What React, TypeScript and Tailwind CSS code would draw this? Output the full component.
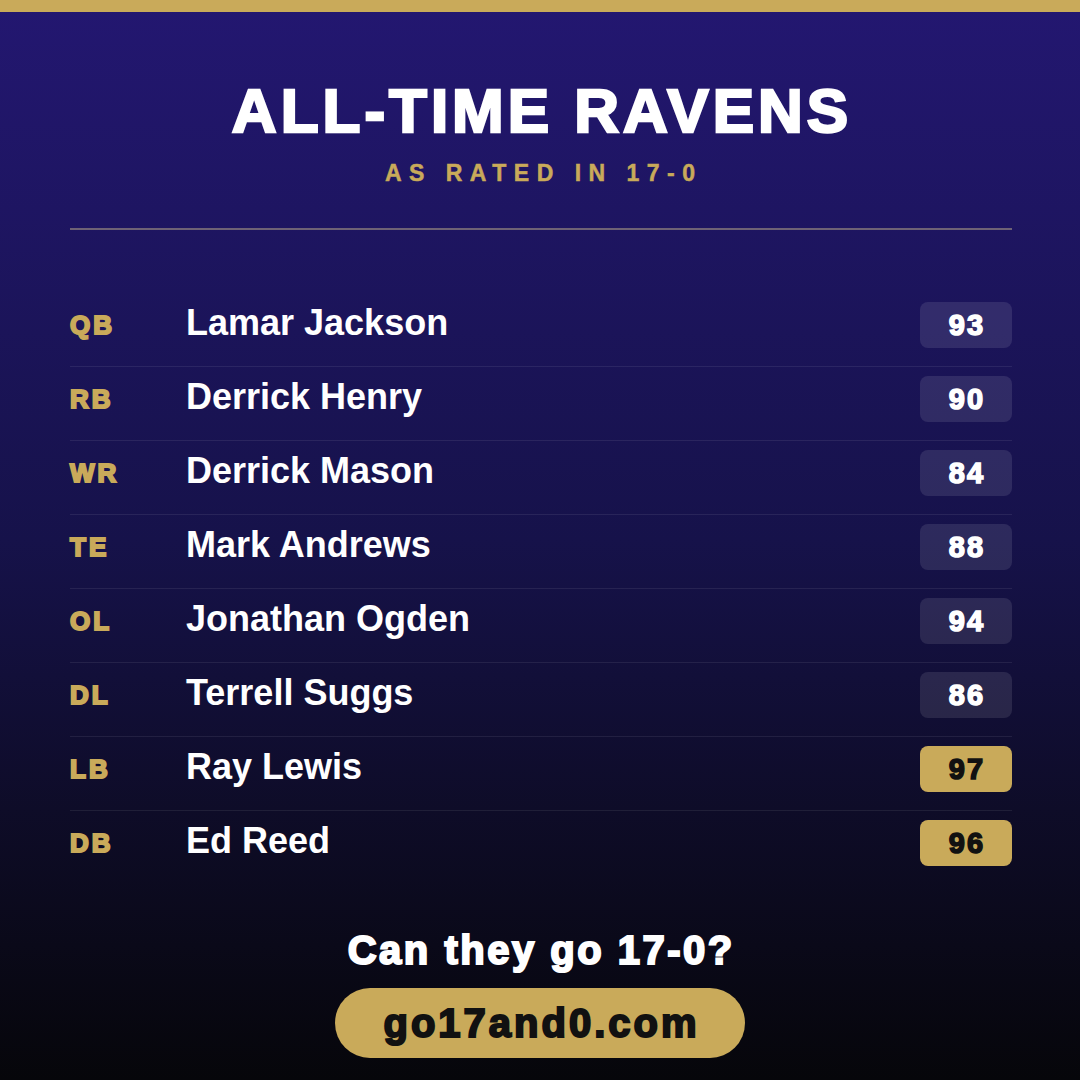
const players = [
  { pos: "QB", name: "Lamar Jackson", rating: 93 },
  { pos: "RB", name: "Derrick Henry", rating: 90 },
  { pos: "WR", name: "Derrick Mason", rating: 84 },
  { pos: "TE", name: "Mark Andrews", rating: 88 },
  { pos: "OL", name: "Jonathan Ogden", rating: 94 },
  { pos: "DL", name: "Terrell Suggs", rating: 86 },
  { pos: "LB", name: "Ray Lewis", rating: 97 },
  { pos: "DB", name: "Ed Reed", rating: 96 },
];

const App = () => {
  return (
    <div className="w-[1080px] h-[1080px] flex flex-col overflow-hidden font-['Liberation_Sans',Arial,sans-serif] bg-[linear-gradient(180deg,#231771_0%,#16124a_50%,#0e0c28_75%,#06060a_100%)]">
      {/* Top accent bar */}
      <div className="h-[12px] bg-[#c9aa5a] shrink-0" />

      {/* Header */}
      <div className="flex flex-col items-center pt-[68px]">
        <h1 className="text-[62px] leading-none font-bold text-white tracking-[4px] pl-[4px] [-webkit-text-stroke:2.5px_currentColor]">
          ALL-TIME RAVENS
        </h1>
        <p className="mt-[20px] text-[23px] leading-none font-bold text-[#c9aa5a] tracking-[7.5px] pl-[7.5px] [-webkit-text-stroke:0.5px_currentColor]">
          AS RATED IN 17-0
        </p>
      </div>

      <div className="mt-[43px] ml-[70px] mr-[68px] h-[2px] bg-[#6e6275]" />

      {/* Roster */}
      <div className="mt-[63px] pl-[70px] pr-[68px] flex flex-col">
        {players.map((p, i) => {
          const top = p.rating >= 95;
          return (
            <div
              key={p.pos}
              className={`flex items-center pt-[9px] pb-[18px] ${i < players.length - 1 ? "border-b border-white/[0.08]" : ""}`}
            >
              <div className="w-[116px] text-[26px] leading-none font-bold text-[#c9aa5a] tracking-[3px] [-webkit-text-stroke:2px_currentColor]">
                {p.pos}
              </div>
              <div className="flex-1 text-[36px] leading-none font-bold text-white mb-[5px]">
                {p.name}
              </div>
              <div
                className={`w-[92px] h-[46px] rounded-[8px] flex items-center justify-center text-[29px] leading-none font-bold tracking-[2px] pl-[2px] [-webkit-text-stroke:1.5px_currentColor] ${
                  top ? "bg-[#c9aa5a] text-[#111111]" : "bg-white/10 text-white"
                }`}
              >
                {p.rating}
              </div>
            </div>
          );
        })}
      </div>

      {/* Footer call to action */}
      <div className="mt-[46px] flex flex-col items-center">
        <p className="text-[40px] leading-none font-bold text-white tracking-[2.5px] pl-[2.5px] [-webkit-text-stroke:2px_currentColor]">
          Can they go 17-0?
        </p>
        <div className="mt-[18px] w-[410px] h-[70px] rounded-full bg-[#c9aa5a] flex items-center justify-center">
          <span className="text-[40px] leading-none font-bold text-[#111111] tracking-[3px] pl-[3px] [-webkit-text-stroke:2px_currentColor]">
            go17and0.com
          </span>
        </div>
      </div>
    </div>
  );
};

export default App;
